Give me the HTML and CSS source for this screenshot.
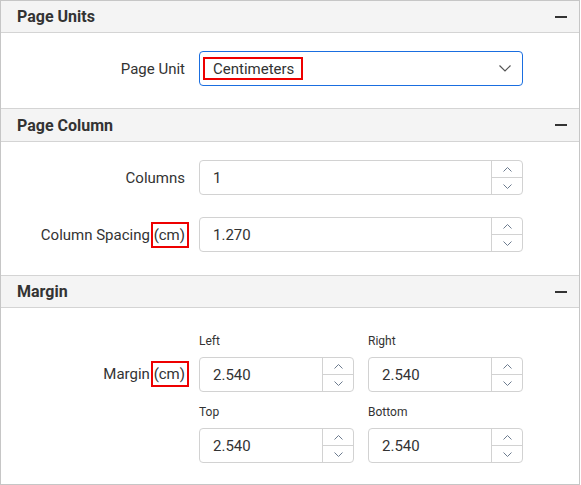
FILE: index.html
```html
<!DOCTYPE html>
<html>
<head>
<meta charset="utf-8">
<link rel="stylesheet" href="styles.css">
</head>
<body>
<div class="panel">
  <section class="section">
    <div class="header"><span class="title">Page Units</span><span class="minus"></span></div>
    <div class="body">
      <div class="row">
        <label class="label">Page Unit</label>
        <div class="dropdown">
          <span class="value mark-wide">Centimeters</span>
          <svg class="chev" width="12" height="7" viewBox="0 0 12 7"><polyline points="0.5,0.5 6,6 11.5,0.5" fill="none" stroke="#555" stroke-width="1.2"/></svg>
        </div>
      </div>
    </div>
  </section>
  <section class="section">
    <div class="header tall"><span class="title">Page Column</span><span class="minus"></span></div>
    <div class="body col-body">
      <div class="row">
        <label class="label">Columns</label>
        <div class="numeric wide">
          <span class="num">1</span>
          <div class="spin">
            <div class="btn"><svg width="9" height="5" viewBox="0 0 9 5"><polyline points="0.5,4.5 4.5,0.5 8.5,4.5" fill="none" stroke="#6c7b8e" stroke-width="1"/></svg></div>
            <div class="btn"><svg width="9" height="5" viewBox="0 0 9 5"><polyline points="0.5,0.5 4.5,4.5 8.5,0.5" fill="none" stroke="#6c7b8e" stroke-width="1"/></svg></div>
          </div>
        </div>
      </div>
      <div class="row">
        <label class="label">Column Spacing <span class="mark">(cm)</span></label>
        <div class="numeric wide">
          <span class="num">1.270</span>
          <div class="spin">
            <div class="btn"><svg width="9" height="5" viewBox="0 0 9 5"><polyline points="0.5,4.5 4.5,0.5 8.5,4.5" fill="none" stroke="#6c7b8e" stroke-width="1"/></svg></div>
            <div class="btn"><svg width="9" height="5" viewBox="0 0 9 5"><polyline points="0.5,0.5 4.5,4.5 8.5,0.5" fill="none" stroke="#6c7b8e" stroke-width="1"/></svg></div>
          </div>
        </div>
      </div>
    </div>
  </section>
  <section class="section last">
    <div class="header"><span class="title">Margin</span><span class="minus"></span></div>
    <div class="body margin-body">
      <div class="row top-row">
        <label class="label margin-label">Margin <span class="mark">(cm)</span></label>
        <div class="grid">
          <div class="field">
            <div class="sub">Left</div>
            <div class="numeric">
              <span class="num">2.540</span>
              <div class="spin">
                <div class="btn"><svg width="9" height="5" viewBox="0 0 9 5"><polyline points="0.5,4.5 4.5,0.5 8.5,4.5" fill="none" stroke="#6c7b8e" stroke-width="1"/></svg></div>
                <div class="btn"><svg width="9" height="5" viewBox="0 0 9 5"><polyline points="0.5,0.5 4.5,4.5 8.5,0.5" fill="none" stroke="#6c7b8e" stroke-width="1"/></svg></div>
              </div>
            </div>
          </div>
          <div class="field">
            <div class="sub">Right</div>
            <div class="numeric">
              <span class="num">2.540</span>
              <div class="spin">
                <div class="btn"><svg width="9" height="5" viewBox="0 0 9 5"><polyline points="0.5,4.5 4.5,0.5 8.5,4.5" fill="none" stroke="#6c7b8e" stroke-width="1"/></svg></div>
                <div class="btn"><svg width="9" height="5" viewBox="0 0 9 5"><polyline points="0.5,0.5 4.5,4.5 8.5,0.5" fill="none" stroke="#6c7b8e" stroke-width="1"/></svg></div>
              </div>
            </div>
          </div>
          <div class="field">
            <div class="sub">Top</div>
            <div class="numeric">
              <span class="num">2.540</span>
              <div class="spin">
                <div class="btn"><svg width="9" height="5" viewBox="0 0 9 5"><polyline points="0.5,4.5 4.5,0.5 8.5,4.5" fill="none" stroke="#6c7b8e" stroke-width="1"/></svg></div>
                <div class="btn"><svg width="9" height="5" viewBox="0 0 9 5"><polyline points="0.5,0.5 4.5,4.5 8.5,0.5" fill="none" stroke="#6c7b8e" stroke-width="1"/></svg></div>
              </div>
            </div>
          </div>
          <div class="field">
            <div class="sub">Bottom</div>
            <div class="numeric">
              <span class="num">2.540</span>
              <div class="spin">
                <div class="btn"><svg width="9" height="5" viewBox="0 0 9 5"><polyline points="0.5,4.5 4.5,0.5 8.5,4.5" fill="none" stroke="#6c7b8e" stroke-width="1"/></svg></div>
                <div class="btn"><svg width="9" height="5" viewBox="0 0 9 5"><polyline points="0.5,0.5 4.5,4.5 8.5,0.5" fill="none" stroke="#6c7b8e" stroke-width="1"/></svg></div>
              </div>
            </div>
          </div>
        </div>
      </div>
    </div>
  </section>
</div>
</body>
</html>
```
FILE: styles.css
```css
* { box-sizing: border-box; }
html, body { margin: 0; padding: 0; background: #fff; }
body { font-family: Roboto, "Liberation Sans", sans-serif; color: #333; font-size: 15px; }

.panel {
  width: 580px;
  height: 485px;
  border: 1px solid #c6c6c6;
  display: flex;
  flex-direction: column;
}
.section { border-bottom: 1px solid #d4d4d4; }
.section.last { border-bottom: none; flex: 1; display: flex; flex-direction: column; }

.header {
  height: 32px;
  background: #f4f4f4;
  border-bottom: 1px solid #d4d4d4;
  display: flex;
  align-items: center;
  justify-content: space-between;
  padding: 0 12px 0 16px;
}
.header.tall { height: 33px; }
.title { font-size: 16px; font-weight: bold; color: #333; }
.minus { width: 12px; height: 2px; background: #333; }

.body { padding: 18px 0 22px; display: flex; flex-direction: column; gap: 22px; }
.col-body { padding-bottom: 23px; }
.margin-body { padding-top: 25px; flex: 1; }

.row { display: flex; align-items: center; }
.label {
  width: 198px;
  text-align: right;
  padding-right: 14px;
  font-size: 15px;
  color: #333;
}

.mark { position: relative; }
.mark::after {
  content: "";
  position: absolute;
  left: -3px; right: -4px; top: -4px; bottom: -4px;
  border: 2px solid #e00;
}
.mark-wide { position: relative; }
.mark-wide::after {
  content: "";
  position: absolute;
  left: -10px; right: -9px; top: -3px; bottom: -2px;
  border: 2px solid #e00;
}

.dropdown {
  width: 324px;
  height: 35px;
  border: 1px solid #1a6ee0;
  border-radius: 4px;
  display: flex;
  align-items: center;
  justify-content: space-between;
  padding: 0 11px 0 13px;
}
.value { font-size: 15px; color: #333; }

.numeric {
  height: 35px;
  border: 1px solid #d2d2d2;
  border-radius: 4px;
  display: flex;
  align-items: stretch;
}
.numeric.wide { width: 324px; }
.num { flex: 1; display: flex; align-items: center; padding-left: 13px; font-size: 15px; color: #333; }
.spin { width: 31px; border-left: 1px solid #d2d2d2; display: flex; flex-direction: column; }
.btn { flex: 1; display: flex; align-items: center; justify-content: center; }
.btn + .btn { border-top: 1px solid #d2d2d2; }

.top-row { align-items: flex-start; }
.margin-label { margin-top: 32px; }
.grid {
  width: 324px;
  display: grid;
  grid-template-columns: 155px 155px;
  column-gap: 14px;
  row-gap: 12px;
}
.sub { font-size: 12px; line-height: 16px; margin-bottom: 8px; color: #333; }
```
